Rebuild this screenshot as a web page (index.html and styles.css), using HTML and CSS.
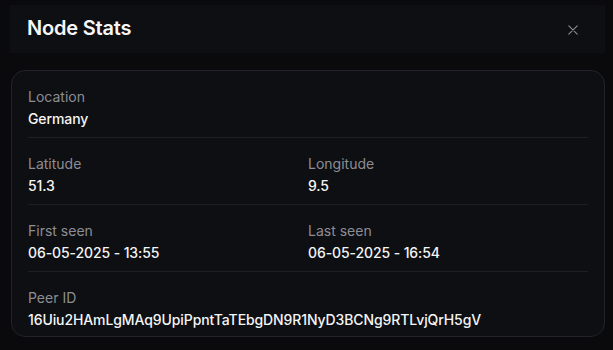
FILE: index.html
```html
<!DOCTYPE html>
<html lang="en">
<head>
<meta charset="utf-8">
<title>Node Stats</title>
<link rel="stylesheet" href="styles.css">
</head>
<body>
<div class="dialog">
  <header class="dialog-header">
    <h2 class="dialog-title">Node Stats</h2>
    <button class="close-btn" aria-label="Close">
      <svg width="10" height="10" viewBox="0 0 10 10" fill="none" stroke="currentColor" stroke-width="1.1" stroke-linecap="round"><path d="M0.8 0.8 L9.2 9.2 M9.2 0.8 L0.8 9.2"/></svg>
    </button>
  </header>
  <section class="card">
    <div class="row">
      <div class="field">
        <div class="label">Location</div>
        <div class="value">Germany</div>
      </div>
    </div>
    <div class="row two">
      <div class="field">
        <div class="label">Latitude</div>
        <div class="value">51.3</div>
      </div>
      <div class="field">
        <div class="label">Longitude</div>
        <div class="value">9.5</div>
      </div>
    </div>
    <div class="row two">
      <div class="field">
        <div class="label">First seen</div>
        <div class="value">06-05-2025 - 13:55</div>
      </div>
      <div class="field">
        <div class="label">Last seen</div>
        <div class="value">06-05-2025 - 16:54</div>
      </div>
    </div>
    <div class="row">
      <div class="field">
        <div class="label">Peer ID</div>
        <div class="value">16Uiu2HAmLgMAq9UpiPpntTaTEbgDN9R1NyD3BCNg9RTLvjQrH5gV</div>
      </div>
    </div>
  </section>
</div>
</body>
</html>
```

FILE: styles.css
```css
* { box-sizing: border-box; }
html, body {
  margin: 0;
  padding: 0;
  background: #0a0a0d;
  font-family: Inter, "Noto Sans", sans-serif;
  color: #f4f4f5;
}
.dialog {
  padding: 5px 8px 0 10px;
  display: flex;
  flex-direction: column;
  gap: 17px;
}
.dialog-header {
  background: #0e0f13;
  height: 48px;
  padding: 9px 17px 11px 17px;
  display: flex;
  align-items: center;
  justify-content: space-between;
}
.dialog-title {
  margin: 0;
  font-size: 20px;
  line-height: 28px;
  font-weight: 600;
  letter-spacing: -0.2px;
  color: #f7f7f8;
}
.close-btn {
  background: none;
  border: 0;
  padding: 0;
  margin: 3px 10px 0 0;
  color: #8d8e95;
  display: flex;
}
.card {
  margin-left: 1px;
  background: #0e0f12;
  border: 1px solid #222328;
  border-radius: 14px;
  padding: 16px 16px 0 16px;
}
.row {
  display: grid;
  grid-template-columns: 1fr;
  padding: 0 0 8px 0;
}
.row + .row {
  border-top: 1px solid #1f2024;
  padding-top: 16px;
  padding-bottom: 8px;
}
.row:last-child { padding-bottom: 6px; }
.row.two { grid-template-columns: 1fr 1fr; }
.label {
  font-size: 14px;
  line-height: 20px;
  color: #8c8d94;
  margin-bottom: 2px;
}
.value {
  font-size: 14px;
  line-height: 20px;
  font-weight: 500;
  letter-spacing: -0.1px;
  color: #f5f5f6;
}
```
